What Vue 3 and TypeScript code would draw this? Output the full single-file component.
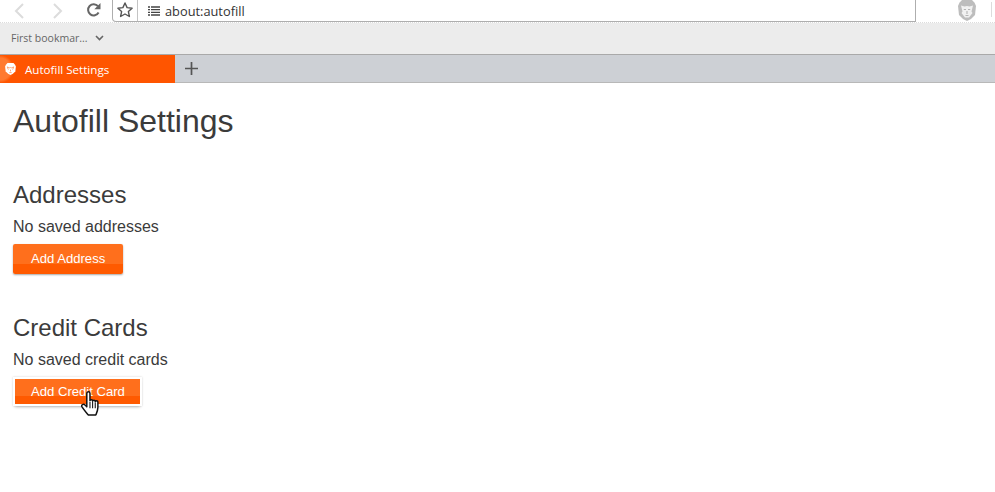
<script setup lang="ts">
interface Section {
  title: string
  empty: string
  action: string
  focused: boolean
}

const sections: Section[] = [
  { title: 'Addresses', empty: 'No saved addresses', action: 'Add Address', focused: false },
  { title: 'Credit Cards', empty: 'No saved credit cards', action: 'Add Credit Card', focused: true },
]
</script>

<template>
  <div class="window">
    <header class="toolbar">
      <div class="nav">
        <svg class="ico back" width="14" height="18" viewBox="0 0 14 18"><path d="M11 2 4 9l7 7" fill="none" stroke="#dcdcdc" stroke-width="2" /></svg>
        <svg class="ico forward" width="14" height="18" viewBox="0 0 14 18"><path d="M3 2l7 7-7 7" fill="none" stroke="#dcdcdc" stroke-width="2" /></svg>
        <svg class="ico reload" width="16" height="16" viewBox="0 0 16 16"><path d="M12.600 10.500A5.600 5.600 0 1 1 12 4.200" fill="none" stroke="#666" stroke-width="2" /><path d="M14.500 1v6.200H8.300z" fill="#666" /></svg>
      </div>
      <div class="urlbar">
        <div class="star">
          <svg width="18" height="18" viewBox="0 0 18 18"><path d="M9 2l2.100 4.600 5 .6-3.700 3.400 1 4.900L9 13l-4.400 2.500 1-4.900-3.700-3.400 5-.6z" fill="none" stroke="#555" stroke-width="1.400" stroke-linejoin="round" /></svg>
        </div>
        <div class="address">
          <svg width="12" height="10" viewBox="0 0 12 10"><path d="M0 1h2M3 1h9M0 3.700h2M3 3.700h9M0 6.300h2M3 6.300h9M0 9h2M3 9h9" stroke="#444" stroke-width="1.300" /></svg>
          <span>about:autofill</span>
        </div>
      </div>
      <div class="brave-slot">
        <svg width="18" height="21" viewBox="0 0 18 21"><path d="M4 0h10l2.600 2.800L18 6l-1 9-4 4-4 2-4-2-4-4L0 6l1.400-3.200z" fill="#bdbdbd" /><path d="M3 5.500l3.500 1 2.500-.6 2.500.6 3.500-1-1.500 6 1 1.500-3.500 4.500H7L3.500 13l1-1.500z" fill="#f1f1f1" /><path d="M5.800 9.500h2.200M10 9.500h2.200M9 11v3M7.500 15.500h3" stroke="#b4b4b4" stroke-width="1.100" fill="none" /></svg>
      </div>
      <span class="divider"></span>
    </header>

    <nav class="bookmarks">
      <span>First bookmar...</span>
      <svg width="9" height="6" viewBox="0 0 9 6"><path d="M1 1l3.500 3.500L8 1" fill="none" stroke="#666" stroke-width="1.600" /></svg>
    </nav>

    <div class="tabstrip">
      <div class="tab">
        <svg width="11" height="12" viewBox="0 0 18 20"><path d="M4 0h10l2.600 2.800L18 6l-1 8-4 4-4 2-4-2-4-4L0 6l1.400-3.200z" fill="#fff" /><path d="M3.500 6.500 7 8l2-.4 2 .4 3.500-1.500-2 4.500M3.500 6.500l2 4.500M9 11v3M7 16h4" fill="none" stroke="#ff9a66" stroke-width="1.400" /></svg>
        <span>Autofill Settings</span>
      </div>
      <svg class="plus" width="13" height="13" viewBox="0 0 13 13"><path d="M6.500 0v13M0 6.500h13" stroke="#555" stroke-width="1.700" /></svg>
    </div>

    <main class="page">
      <h1>Autofill Settings</h1>
      <section v-for="s in sections" :key="s.title" class="block">
        <h2>{{ s.title }}</h2>
        <p>{{ s.empty }}</p>
        <div class="action" :class="{ focused: s.focused }">
          <button type="button">{{ s.action }}</button>
          <svg v-if="s.focused" class="cursor" width="19" height="28" viewBox="0 0 18 24">
            <path d="M5.500 2c0-2 3-2 3 0v7c0-1.500 2.500-1.500 2.500 0v.5c0-1.500 2.500-1.500 2.500 0v.5c0-1.500 2.500-1.500 2.500 0v5c0 3-1 5-2 7.500H7C5 20 3 18 .8 14.500c-.8-1.500 1.500-3 3-1.500l1.700 1.700z" fill="#fff" stroke="#111" stroke-width="1.400" stroke-linejoin="round" />
            <path d="M8.500 10v6M11 10v6M13.500 11v5" stroke="#111" stroke-width="1" />
          </svg>
        </div>
      </section>
    </main>
  </div>
</template>

<style scoped>
.window {
  width: 995px;
  height: 492px;
  overflow: hidden;
  background: #fff;
  display: flex;
  flex-direction: column;
  font-family: "Liberation Sans", Arial, sans-serif;
  color: #3b3b3b;
}
.toolbar {
  height: 22px;
  flex: none;
  display: flex;
  align-items: flex-start;
  background: #fff;
  border-bottom: 1px dotted #dcdcdc;
}
.nav {
  width: 112px;
  height: 22px;
  flex: none;
  display: flex;
  align-items: center;
  padding-left: 12px;
  box-sizing: border-box;
}
.forward { margin-left: 25px; }
.reload { margin-left: 21px; margin-top: -2px; }
.urlbar {
  width: 804px;
  height: 22px;
  flex: none;
  display: flex;
  box-sizing: border-box;
  border: 1px solid #aeaeae;
  border-top: none;
  border-radius: 0 0 0 4px;
}
.star {
  width: 24px;
  flex: none;
  display: flex;
  align-items: center;
  justify-content: center;
  padding-bottom: 2px;
  border-right: 1px solid #c4c4c4;
}
.address {
  display: flex;
  align-items: center;
  gap: 5px;
  padding-left: 10px;
  font-family: "Open Sans", sans-serif;
  font-size: 12.800px;
  font-weight: 500;
  color: #333;
}
.brave-slot {
  margin-left: 42px;
  height: 21px;
}
.divider {
  width: 1px;
  height: 15px;
  margin: 2px 0 0 15px;
  background: #dcdcdc;
}
.bookmarks {
  height: 32px;
  flex: none;
  box-sizing: border-box;
  display: flex;
  align-items: center;
  gap: 7px;
  padding: 0 0 1px 11px;
  background: #ececec;
  border-bottom: 1px solid #a9a9a9;
  font-family: "Open Sans", sans-serif;
  font-size: 10.500px;
  color: #666;
}
.tabstrip {
  height: 28px;
  flex: none;
  box-sizing: border-box;
  display: flex;
  align-items: center;
  background: #cdd0d5;
  border-bottom: 1px solid #b8b8b8;
}
.tab {
  width: 175px;
  height: 28px;
  flex: none;
  box-sizing: border-box;
  display: flex;
  align-items: center;
  gap: 9px;
  padding-left: 5px;
  margin-top: 1px;
  background: radial-gradient(circle at 0 50%, #ff7a30 0 11px, #ff5500 14px);
  color: #fff;
  font-family: "Open Sans", sans-serif;
  font-size: 11.600px;
}
.plus { margin-left: 10px; }
.page {
  flex: 1;
  padding: 0 13px;
}
h1 {
  margin: 20px 0 0;
  font-size: 32px;
  font-weight: 400;
  line-height: 36px;
}
.block { margin-top: 42px; }
.block + .block { margin-top: 40px; }
h2 {
  margin: 0;
  font-size: 24px;
  font-weight: 400;
  line-height: 27px;
}
p {
  margin: 8px 0 0;
  font-size: 16px;
  line-height: 22px;
}
.action {
  position: relative;
  display: flex;
  width: fit-content;
  margin-top: 6px;
}
button {
  height: 30px;
  padding: 0 18px 2px;
  border: none;
  border-radius: 2px;
  background: linear-gradient(#ff6f1c 0 66%, #ff5a00 66%);
  box-shadow: 0 1px 2px rgba(0, 0, 0, .35);
  color: #fff;
  font: 13.100px "Liberation Sans", Arial, sans-serif;
}
.focused {
  margin-left: 2px;
  margin-top: 8px;
}
.focused button {
  height: 25px;
  padding: 0 15px 1px 16px;
  border-radius: 0;
  box-shadow: 0 0 0 2px #fff, 0 0 2px 2px rgba(0, 0, 0, .18), 0 3px 3px rgba(0, 0, 0, .25);
}
.cursor {
  position: absolute;
  left: 66px;
  top: 11px;
}
</style>
